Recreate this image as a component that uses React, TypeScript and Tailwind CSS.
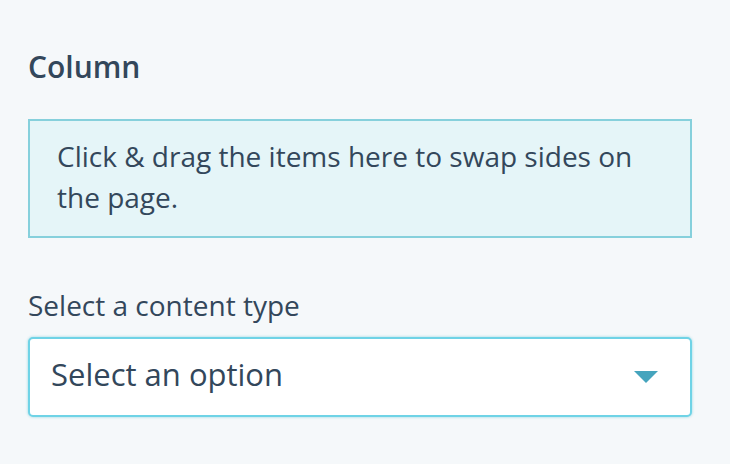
export default function App() {
  return (
    <div
      className="w-[730px] h-[464px] bg-[#f5f8fa] text-[#33475b] pl-[28px] pr-[38px] pt-[47px]"
      style={{ fontFamily: "'Open Sans', Lato, sans-serif" }}
    >
      <h2 className="text-[30px] leading-[40px] font-semibold">Column</h2>
      <div className="mt-[32px] h-[119px] border-2 border-[#86d0dc] bg-[#e5f5f8] pl-[27px] pr-[40px] pt-[15px] text-[28px] leading-[41px] font-normal">
        Click &amp; drag the items here to swap sides on the page.
      </div>
      <label className="block mt-[52px] text-[28px] leading-[30px] font-medium">Select a content type</label>
      <div className="mt-[17px] h-[80px] rounded-[5px] border-2 border-[#6fd3e6] bg-white shadow-[0_0_3px_rgba(0,164,189,0.4)] flex items-center justify-between pl-[21px] pr-[32px]">
        <span className="text-[31px] leading-[40px] mb-[6px]">Select an option</span>
        <svg width="24" height="12" viewBox="0 0 24 12">
          <polygon points="0,0 24,0 12,12" fill="#45a4bd" />
        </svg>
      </div>
    </div>
  );
}
